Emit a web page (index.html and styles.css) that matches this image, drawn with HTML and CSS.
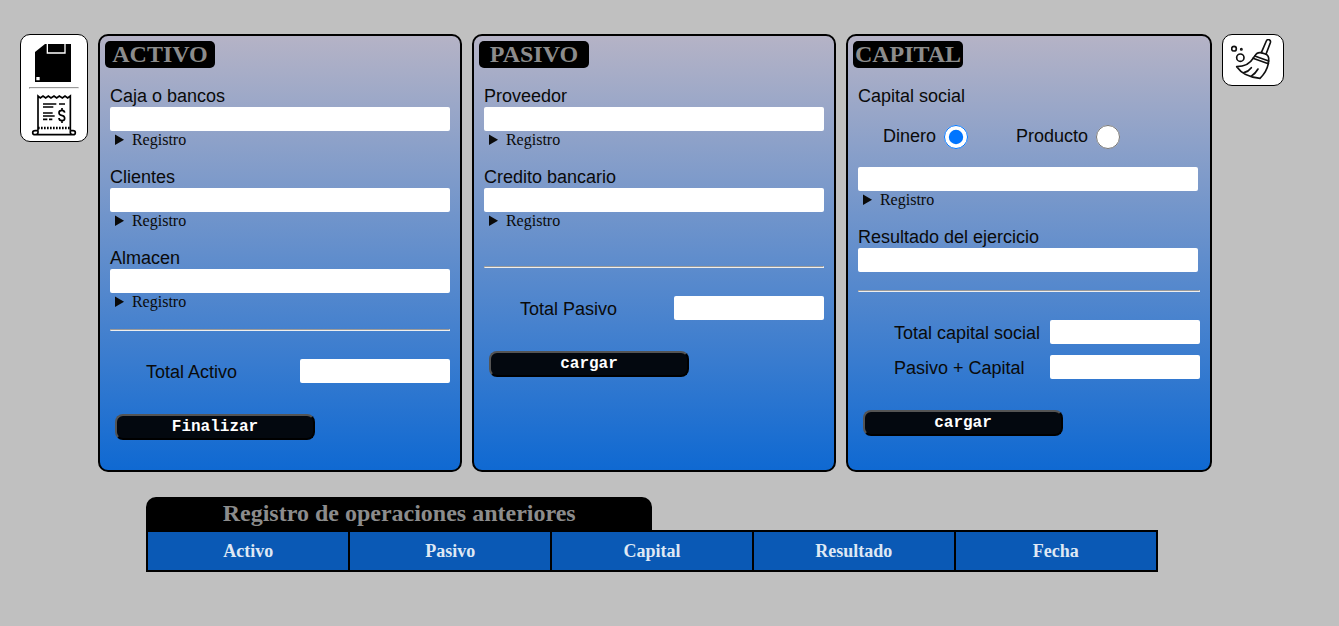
FILE: index.html
```html
<!DOCTYPE html>
<html lang="es">
<head>
<meta charset="utf-8">
<title>Balance general</title>
<link rel="stylesheet" href="styles.css">
</head>
<body>
<main class="page">
  <div class="board">
    <nav class="tools" aria-label="Acciones">
      <button class="tool" type="button" aria-label="Guardar">
        <svg width="50" height="43" viewBox="57 48 150 129">
          <path d="M105 57H183V171H75V81Z"/>
          <path d="M112 57V84H165V57" fill="none" stroke="#fff" stroke-width="4"/>
          <path d="M79 156H89V166H79Z" fill="#fff"/>
        </svg>
      </button>
      <hr class="tools-line">
      <button class="tool" type="button" aria-label="Recibo">
        <svg width="50" height="45" viewBox="57 204 150 135" fill="none" stroke="#000" stroke-width="5">
          <path d="M84 317V213L91 219L99 213L107 219L115 213L123 219L132 213L140 219L148 213L157 219L165 213L173 219L181 213V317"/>
          <path d="M84 317H76Q68 317 68 323T76 329H189Q196 329 196 323T189 317H181M84 317V323Q83 329 77 329M181 317V323Q182 329 188 329"/>
          <path d="M99 237H139M147 237H165M99 246H130M99 264H128M99 273H134M99 283H112M117 283H127"/>
          <path d="M84 309H181" stroke-width="8" stroke-dasharray="5 4"/>
          <path d="M164 263Q163 256 156 256Q147 256 147 263Q147 269 155 271Q164 273 164 280Q164 287 156 287Q147 287 147 279M156 249V256M156 287V294"/>
        </svg>
      </button>
    </nav>

    <section class="panel">
      <h2 class="panel-title">ACTIVO</h2>
      <div class="panel-body">
        <div class="field">
          <label for="caja">Caja o bancos</label>
          <input class="box" id="caja" type="text">
          <details><summary>Registro</summary></details>
        </div>
        <div class="field">
          <label for="clientes">Clientes</label>
          <input class="box" id="clientes" type="text">
          <details><summary>Registro</summary></details>
        </div>
        <div class="field">
          <label for="almacen">Almacen</label>
          <input class="box" id="almacen" type="text">
          <details><summary>Registro</summary></details>
        </div>
        <hr class="line">
        <div class="totals">
          <div class="total"><label for="total-activo">Total Activo</label><input class="box" id="total-activo" type="text"></div>
        </div>
        <button class="action" type="button">Finalizar</button>
      </div>
    </section>

    <section class="panel">
      <h2 class="panel-title">PASIVO</h2>
      <div class="panel-body">
        <div class="field">
          <label for="proveedor">Proveedor</label>
          <input class="box" id="proveedor" type="text">
          <details><summary>Registro</summary></details>
        </div>
        <div class="field">
          <label for="credito">Credito bancario</label>
          <input class="box" id="credito" type="text">
          <details><summary>Registro</summary></details>
        </div>
        <hr class="line line-spaced">
        <div class="totals">
          <div class="total"><label for="total-pasivo">Total Pasivo</label><input class="box" id="total-pasivo" type="text"></div>
        </div>
        <button class="action" type="button">cargar</button>
      </div>
    </section>

    <section class="panel">
      <h2 class="panel-title">CAPITAL</h2>
      <div class="panel-body">
        <div class="field">
          <label for="capital-social">Capital social</label>
          <div class="choices">
            <label class="choice"><span>Dinero</span><input type="radio" name="tipo" checked></label>
            <label class="choice"><span>Producto</span><input type="radio" name="tipo"></label>
          </div>
          <input class="box" id="capital-social" type="text">
          <details><summary>Registro</summary></details>
        </div>
        <div class="field">
          <label for="resultado">Resultado del ejercicio</label>
          <input class="box" id="resultado" type="text">
        </div>
        <hr class="line">
        <div class="totals">
          <div class="total"><label for="total-capital">Total capital social</label><input class="box" id="total-capital" type="text"></div>
          <div class="total"><label for="suma">Pasivo + Capital</label><input class="box" id="suma" type="text"></div>
        </div>
        <button class="action" type="button">cargar</button>
      </div>
    </section>

    <nav class="tools" aria-label="Limpieza">
      <button class="tool tool-clean" type="button" aria-label="Limpiar">
        <svg width="44" height="42" viewBox="63 42 132 126" fill="none" stroke="#111" stroke-width="5" stroke-linecap="round" stroke-linejoin="round">
          <circle cx="72" cy="71" r="7"/>
          <circle cx="94" cy="73" r="2"/>
          <circle cx="91" cy="98" r="11"/>
          <path d="M154 83L169 48Q172 42 177 44Q183 46 181 53L168 88"/>
          <path d="M134 94Q140 81 153 83L166 87Q178 91 176 107L175 116L129 100Z"/>
          <path d="M134 93L176 108"/>
          <path d="M129 100Q116 124 80 125Q101 155 150 160Q170 141 175 116M102 143Q116 139 124 128M123 154Q137 145 144 132"/>
        </svg>
      </button>
    </nav>
  </div>

  <section class="history">
    <h2 class="history-title">Registro de operaciones anteriores</h2>
    <table class="history-table">
      <thead>
        <tr><th scope="col">Activo</th><th scope="col">Pasivo</th><th scope="col">Capital</th><th scope="col">Resultado</th><th scope="col">Fecha</th></tr>
      </thead>
    </table>
  </section>
</main>
</body>
</html>
```

FILE: styles.css
```css
* { box-sizing: border-box; }

body {
  margin: 0;
  background: #c0c0c0;
  color: #0a0a0a;
  font-family: "Liberation Serif", "Times New Roman", serif;
  font-size: 16px;
}

.page { padding: 34px 55px 34px 20px; }

.board {
  display: grid;
  grid-template-columns: 68px 182fr 182fr 183fr 62px;
  gap: 10px;
}

.tools {
  align-self: start;
  overflow: hidden;
  background: #fff;
  border: 1px solid #000;
  border-radius: 10px;
}

.tool {
  display: flex;
  justify-content: center;
  width: 100%;
  padding: 6px 0 0;
  border: 0;
  background: none;
  cursor: pointer;
}

.tools-line { margin: 3px 8px 4px; }
.tools-line + .tool { padding: 0 0 3px; }
.tool-clean { padding: 4px 0; }

.panel {
  padding: 5px;
  border: 2px solid #000;
  border-radius: 10px;
  background: linear-gradient(#b5b3c6, #0f69d2);
}

.panel-title {
  width: 110px;
  margin: 0;
  border-radius: 5px;
  background: #000;
  color: #8c8c8c;
  font-size: 24px;
  line-height: 27px;
  text-align: center;
}

.panel-body { padding: 17px 5px 25px; }

label {
  font-family: "Liberation Sans", Arial, sans-serif;
  font-size: 18px;
  line-height: 22px;
}

.field {
  display: flex;
  flex-direction: column;
  max-width: 340px;
}

.field + .field { margin-top: 17px; }

.box {
  width: 100%;
  height: 24px;
  padding: 0 4px;
  border: 0;
  border-radius: 2px;
  background: #fff;
  font-size: 16px;
}

summary {
  padding-left: 5px;
  line-height: 18px;
  cursor: pointer;
}

.choices {
  display: flex;
  gap: 48px;
  padding: 18px 25px;
}

.choice {
  display: flex;
  gap: 8px;
}

.choice input {
  width: 24px;
  height: 24px;
  margin: 0;
}

.line { margin: 18px 0 28px; }
.line-spaced { margin-top: 36px; }

.totals {
  display: grid;
  gap: 11px;
  margin-bottom: 31px;
}

.total {
  display: flex;
  align-items: flex-end;
  justify-content: space-between;
  padding-left: 36px;
}

.total .box { width: 150px; }

.action {
  display: block;
  width: 200px;
  height: 26px;
  margin-left: 5px;
  padding: 0;
  border: 2px outset #000;
  border-radius: 8px;
  background: #03080f;
  color: #fff;
  font: bold 16px "Liberation Mono", "Courier New", monospace;
  cursor: pointer;
}

.history {
  width: 80%;
  margin: 25px auto 0;
}

.history-title {
  width: 50%;
  margin: 0;
  border-radius: 10px 10px 0 0;
  background: #000;
  color: #8c8c8c;
  font-size: 24px;
  line-height: 33px;
  text-align: center;
}

.history-table {
  width: 100%;
  border-collapse: collapse;
  table-layout: fixed;
  background: #0a59b5;
}

.history-table th {
  padding: 0;
  border: 2px solid #000;
  color: #dfe8f4;
  font-size: 18px;
  line-height: 38px;
}
```
